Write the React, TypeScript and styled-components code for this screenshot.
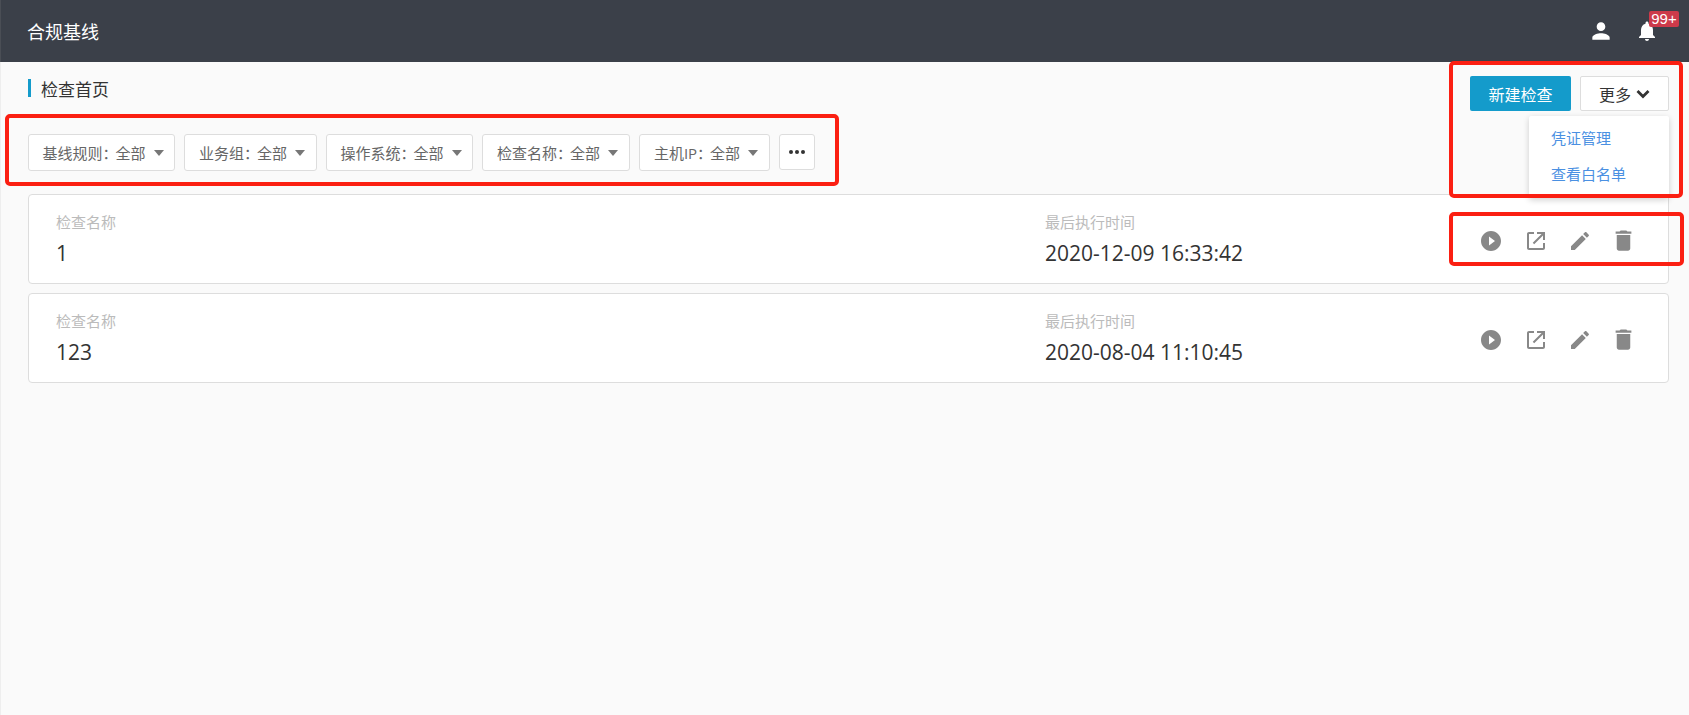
import styled, { createGlobalStyle } from "styled-components";

const GlobalStyle = createGlobalStyle`
  html, body {
    margin: 0;
    padding: 0;
    height: 100%;
    background: #fafafa;
    font-family: "Open Sans", "Noto Sans CJK SC", sans-serif;
  }
  * {
    box-sizing: border-box;
  }
`;

const ICONS = {
  play: "M12 2C6.48 2 2 6.48 2 12s4.48 10 10 10 10-4.48 10-10S17.52 2 12 2zm-2 14.5v-9l6 4.5-6 4.5z",
  open: "M19 19H5V5h5V3H5c-1.11 0-2 .9-2 2v14c0 1.1.89 2 2 2h14c1.1 0 2-.9 2-2v-5h-2v5zM13 3v2h4.59l-8.83 8.83 1.41 1.41L19 6.41V11h2V3h-8z",
  edit: "M3 17.25V21h3.75L17.81 9.94l-3.75-3.75L3 17.25zM20.71 7.04c.39-.39.39-1.02 0-1.41l-2.34-2.34c-.39-.39-1.02-.39-1.41 0l-1.83 1.83 3.75 3.75 1.83-1.83z",
  trash: "M6 19c0 1.1.9 2 2 2h8c1.1 0 2-.9 2-2V7H6v12zM19 4h-3.5l-1-1h-5l-1 1H5v2h14V4z",
  person: "M12 12c2.21 0 4-1.79 4-4s-1.79-4-4-4-4 1.79-4 4 1.79 4 4 4zm0 2c-2.67 0-8 1.34-8 4v2h16v-2c0-2.66-5.33-4-8-4z",
  bell: "M12 22c1.1 0 2-.9 2-2h-4c0 1.1.89 2 2 2zm6-6v-5c0-3.07-1.64-5.64-4.5-6.32V4c0-.83-.67-1.5-1.5-1.5s-1.5.67-1.5 1.5v.68C7.63 5.36 6 7.92 6 11v5l-2 2v1h16v-1l-2-2z",
};

const Icon = ({ name, size = 24 }: { name: keyof typeof ICONS; size?: number }) => (
  <svg width={size} height={size} viewBox="0 0 24 24" fill="currentColor">
    <path d={ICONS[name]} />
  </svg>
);

const Chevron = () => (
  <svg width="14" height="10" viewBox="0 0 14 10" fill="none" stroke="currentColor" strokeWidth="2.8">
    <path d="M1.5 2 7 7.5 12.5 2" />
  </svg>
);

const filters = [
  { label: "基线规则", width: 147 },
  { label: "业务组", width: 133 },
  { label: "操作系统", width: 147 },
  { label: "检查名称", width: 148 },
  { label: "主机IP", width: 131 },
];

const checks = [
  { name: "1", time: "2020-12-09 16:33:42" },
  { name: "123", time: "2020-08-04 11:10:45" },
];

const actions: { icon: keyof typeof ICONS; size: number; width: number }[] = [
  { icon: "play", size: 24, width: 44 },
  { icon: "open", size: 24, width: 46 },
  { icon: "edit", size: 24, width: 42 },
  { icon: "trash", size: 27, width: 44 },
];

export default function App() {
  return (
    <Page>
      <GlobalStyle />
      <Header>
        <Brand>合规基线</Brand>
        <HeaderIcons>
          <PersonSlot>
            <Icon name="person" size={26} />
          </PersonSlot>
          <BellSlot>
            <Icon name="bell" />
            <Badge>99+</Badge>
          </BellSlot>
        </HeaderIcons>
      </Header>
      <Main>
        <TopRow>
          <Title>
            <TitleText>检查首页</TitleText>
          </Title>
          <TopActions>
            <PrimaryButton>新建检查</PrimaryButton>
            <MoreButton>
              更多
              <Chevron />
              <Menu>
                <MenuItem>凭证管理</MenuItem>
                <MenuItem>查看白名单</MenuItem>
              </Menu>
            </MoreButton>
          </TopActions>
        </TopRow>
        <FilterRow>
          {filters.map((f) => (
            <Filter key={f.label} $width={f.width}>
              <FilterText>{f.label}：</FilterText>
              <FilterValue>全部</FilterValue>
              <Caret />
            </Filter>
          ))}
          <DotsButton>
            <Dot />
            <Dot />
            <Dot />
          </DotsButton>
        </FilterRow>
        <CardList>
          {checks.map((c) => (
            <Card key={c.name}>
              <NameCol>
                <Label>检查名称</Label>
                <Value>{c.name}</Value>
              </NameCol>
              <TimeCol>
                <Label>最后执行时间</Label>
                <Value>{c.time}</Value>
              </TimeCol>
              <CardActions>
                {actions.map((a) => (
                  <ActionSlot key={a.icon} $width={a.width}>
                    <Icon name={a.icon} size={a.size} />
                  </ActionSlot>
                ))}
              </CardActions>
            </Card>
          ))}
        </CardList>
      </Main>
      <Marker $left={5} $top={114} $width={834} $height={72} />
      <Marker $left={1449} $top={61} $width={234} $height={137} />
      <Marker $left={1449} $top={212} $width={235} $height={54} />
    </Page>
  );
}

const Page = styled.div`
  position: relative;
  width: 1689px;
  height: 715px;
  overflow: hidden;
  background: #fafafa;
`;

const Header = styled.header`
  display: flex;
  align-items: center;
  justify-content: space-between;
  height: 62px;
  padding: 0 10px 0 28px;
  background: #3b4049;
  border-left: 1px solid #4a4e55;
`;

const Brand = styled.div`
  margin-left: -2px;
  font-size: 18px;
  color: #fff;
`;

const HeaderIcons = styled.div`
  display: flex;
  align-items: center;
  color: #fff;
`;

const PersonSlot = styled.div`
  display: flex;
  width: 47px;
`;

const BellSlot = styled.div`
  position: relative;
  display: flex;
  width: 44px;
`;

const Badge = styled.span`
  position: absolute;
  left: 14px;
  top: -8px;
  width: 30px;
  height: 16px;
  border-radius: 2px;
  background: #cc3a4a;
  color: #fff;
  font-family: "Liberation Sans", sans-serif;
  font-size: 15px;
  line-height: 16px;
  text-align: center;
`;

const Main = styled.main`
  padding: 14px 20px 0 27px;
  height: 653px;
  border-left: 1px solid #eee;
`;

const TopRow = styled.div`
  display: flex;
  justify-content: space-between;
  align-items: flex-start;
  height: 35px;
`;

const Title = styled.h1`
  margin: 3px 0 0;
  padding-left: 10px;
  height: 18px;
  border-left: 3px solid #149bcb;
  font-size: 17px;
  font-weight: 400;
  line-height: 18px;
  color: #333;
`;

const TitleText = styled.span`
  display: block;
  padding-top: 2px;
`;

const TopActions = styled.div`
  display: flex;
  gap: 9px;
`;

const PrimaryButton = styled.button`
  width: 101px;
  height: 35px;
  padding: 0;
  border: 0;
  border-radius: 2px;
  background: #149bcb;
  color: #fff;
  font: inherit;
  font-size: 16px;
`;

const MoreButton = styled.div`
  position: relative;
  display: flex;
  align-items: center;
  justify-content: center;
  gap: 5px;
  width: 89px;
  height: 35px;
  border: 1px solid #ddd;
  border-radius: 2px;
  background: #fff;
  color: #333;
  font-size: 16px;
`;

const Menu = styled.div`
  position: absolute;
  right: -1px;
  top: 39px;
  width: 140px;
  height: 82px;
  padding: 4px 0 0 22px;
  border-radius: 2px;
  background: #fff;
  box-shadow: 0 2px 6px rgba(0, 0, 0, 0.18);
  z-index: 2;
`;

const MenuItem = styled.div`
  height: 36px;
  font-size: 15px;
  line-height: 36px;
  color: #4a90e2;
`;

const FilterRow = styled.div`
  display: flex;
  gap: 9px;
  margin-top: 23px;
`;

const Filter = styled.div<{ $width: number }>`
  display: flex;
  align-items: center;
  justify-content: center;
  width: ${(p) => p.$width}px;
  height: 37px;
  padding-left: 3px;
  border: 1px solid #ddd;
  border-radius: 3px;
  background: #fff;
  color: #666;
  font-size: 15px;
`;

const FilterText = styled.span`
  margin-right: -2px;
`;

const FilterValue = styled.span``;

const Caret = styled.span`
  width: 0;
  height: 0;
  margin-left: 8px;
  border-left: 5px solid transparent;
  border-right: 5px solid transparent;
  border-top: 6px solid #777;
`;

const DotsButton = styled.div`
  display: flex;
  align-items: center;
  justify-content: center;
  gap: 2px;
  width: 36px;
  height: 36px;
  border: 1px solid #ddd;
  border-radius: 3px;
  background: #fff;
`;

const Dot = styled.span`
  width: 4px;
  height: 4px;
  border-radius: 50%;
  background: #333;
`;

const CardList = styled.div`
  display: flex;
  flex-direction: column;
  gap: 9px;
  margin-top: 23px;
`;

const Card = styled.div`
  display: flex;
  align-items: center;
  height: 90px;
  padding: 0 23px 0 27px;
  border: 1px solid #ddd;
  border-radius: 4px;
  background: #fff;
`;

const NameCol = styled.div`
  flex: 0 0 989px;
`;

const TimeCol = styled.div`
  flex: 1;
`;

const Label = styled.div`
  font-size: 15px;
  line-height: 20px;
  color: #bbb;
`;

const Value = styled.div`
  margin-top: 7px;
  font-size: 21px;
  line-height: 28px;
  color: #333;
`;

const CardActions = styled.div`
  display: flex;
  margin-top: 3px;
  color: #888;
`;

const ActionSlot = styled.div<{ $width: number }>`
  display: flex;
  align-items: center;
  justify-content: center;
  width: ${(p) => p.$width}px;
`;

const Marker = styled.div<{ $left: number; $top: number; $width: number; $height: number }>`
  position: absolute;
  left: ${(p) => p.$left}px;
  top: ${(p) => p.$top}px;
  width: ${(p) => p.$width}px;
  height: ${(p) => p.$height}px;
  border: 4px solid #fb1f12;
  border-radius: 5px;
  z-index: 3;
`;
